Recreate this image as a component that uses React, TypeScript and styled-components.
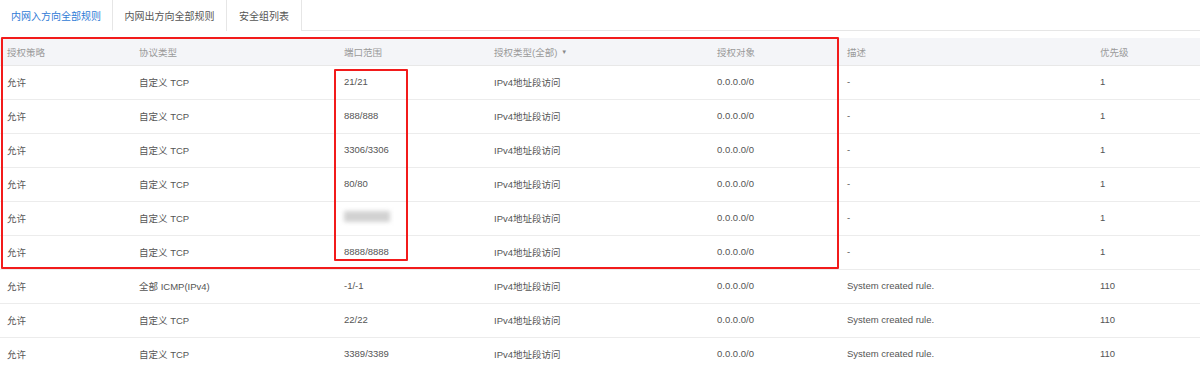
import React from "react";
import styled, { createGlobalStyle } from "styled-components";

const GlobalStyle = createGlobalStyle`
    html, body {
        margin: 0;
        padding: 0;
        background: #fff;
    }
    body {
        font-family: "Liberation Sans", "Noto Sans CJK SC", sans-serif;
        font-size: 9.5px;
        color: #555;
    }
`;

const Page = styled.div`
    width: 1200px;
    height: 371px;
    overflow: hidden;
`;

const TabBar = styled.div`
    display: flex;
    height: 31px;
    border-bottom: 1px solid #e6e6e6;
    box-sizing: border-box;
`;

const Tab = styled.div<{ $active?: boolean; $w: number }>`
    display: flex;
    align-items: center;
    justify-content: center;
    width: ${(p) => p.$w}px;
    height: 31px;
    box-sizing: border-box;
    background: #fff;
    color: ${(p) => (p.$active ? "#2f7bd6" : "#555")};
    border-right: 1px solid #e6e6e6;
    border-bottom: ${(p) => (p.$active ? "1px solid #fff" : "none")};
    font-size: 10px;
`;

const TableWrap = styled.div`
    position: relative;
    margin-top: 7px;
`;

const Grid = styled.div`
    display: grid;
    grid-template-columns: 133px 205px 150px 223px 130px 253px 106px;
`;

const HeadCell = styled.div<{ $first?: boolean }>`
    height: 28px;
    display: flex;
    align-items: center;
    background: #f4f5f8;
    color: #9a9a9a;
    border-bottom: 1px solid #e8e8e8;
    box-sizing: border-box;
    padding-left: ${(p) => (p.$first ? 7 : 6)}px;
`;

const Cell = styled.div<{ $first?: boolean }>`
    height: 34px;
    display: flex;
    align-items: center;
    border-bottom: 1px solid #ececec;
    box-sizing: border-box;
    padding-left: ${(p) => (p.$first ? 7 : 6)}px;
    padding-bottom: 2px;
    white-space: nowrap;
`;

const Caret = styled.span`
    margin-left: 4px;
    font-size: 6px;
    color: #888;
`;

const Blurred = styled.span`
    display: inline-block;
    width: 46px;
    height: 11px;
    background: #d2d2d2;
    filter: blur(2px);
    margin-top: -2px;
`;

const Highlight = styled.div<{ $l: number; $t: number; $w: number; $h: number }>`
    position: absolute;
    left: ${(p) => p.$l}px;
    top: ${(p) => p.$t}px;
    width: ${(p) => p.$w}px;
    height: ${(p) => p.$h}px;
    border: 2px solid #f21b1b;
    box-sizing: border-box;
    border-radius: 1px;
    pointer-events: none;
`;

const headers = ["授权策略", "协议类型", "端口范围", "授权类型(全部)", "授权对象", "描述", "优先级"];

const rows = [
    ["允许", "自定义 TCP", "21/21", "1", "-"],
    ["允许", "自定义 TCP", "888/888", "1", "-"],
    ["允许", "自定义 TCP", "3306/3306", "1", "-"],
    ["允许", "自定义 TCP", "80/80", "1", "-"],
    ["允许", "自定义 TCP", "", "1", "-"],
    ["允许", "自定义 TCP", "8888/8888", "1", "-"],
    ["允许", "全部 ICMP(IPv4)", "-1/-1", "110", "System created rule."],
    ["允许", "自定义 TCP", "22/22", "110", "System created rule."],
    ["允许", "自定义 TCP", "3389/3389", "110", "System created rule."],
];

export default function App() {
    return (
        <Page>
            <GlobalStyle />
            <TabBar>
                <Tab $active $w={113}>内网入方向全部规则</Tab>
                <Tab $w={114}>内网出方向全部规则</Tab>
                <Tab $w={75}>安全组列表</Tab>
            </TabBar>
            <TableWrap>
                <Grid>
                    {headers.map((h, i) => (
                        <HeadCell key={h} $first={i === 0}>
                            {h}
                            {i === 3 && <Caret>▼</Caret>}
                        </HeadCell>
                    ))}
                    {rows.map((r, ri) => (
                        <React.Fragment key={ri}>
                            <Cell $first>{r[0]}</Cell>
                            <Cell>{r[1]}</Cell>
                            <Cell>{r[2] ? r[2] : <Blurred />}</Cell>
                            <Cell>IPv4地址段访问</Cell>
                            <Cell>0.0.0.0/0</Cell>
                            <Cell>{r[4]}</Cell>
                            <Cell>{r[3]}</Cell>
                        </React.Fragment>
                    ))}
                </Grid>
                <Highlight $l={1} $t={-1} $w={838} $h={232} />
                <Highlight $l={334} $t={31} $w={74} $h={192} />
            </TableWrap>
        </Page>
    );
}
